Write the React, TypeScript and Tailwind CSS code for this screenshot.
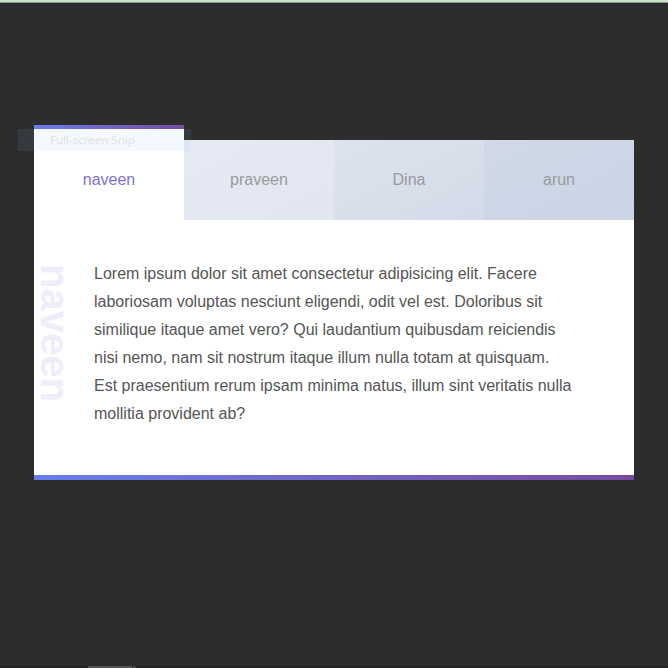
import React from "react";

export default function App() {
  return (
    <div className="relative flex h-[668px] w-[668px] flex-col overflow-hidden bg-[#2d2d2d] font-['Liberation_Sans',Arial,sans-serif]">
      <div className="h-[2px] bg-[#c9e3c9]" />
      <div className="h-[1px] bg-[#8d9c8d]" />
      <div className="pl-[34px] pt-[122px]">
        <div className="w-[600px]">
          <div className="flex h-[95px] items-end">
            <div className="flex h-[95px] w-[150px] flex-col bg-white">
              <div className="h-[4px] bg-gradient-to-r from-[#667eea] to-[#764ba2]" />
              <div className="mt-[11px] flex h-[80px] items-center justify-center text-[16px] text-[#7b70d9]">
                naveen
              </div>
            </div>
            <div className="flex h-[80px] w-[150px] items-center justify-center bg-gradient-to-br from-[#e6eaf4] to-[#e1e6f0] text-[16px] text-[#9a9a9a]">
              praveen
            </div>
            <div className="flex h-[80px] w-[150px] items-center justify-center bg-gradient-to-br from-[#dde3ee] to-[#d4dbe8] text-[16px] text-[#9a9a9a]">
              Dina
            </div>
            <div className="flex h-[80px] w-[150px] items-center justify-center bg-gradient-to-br from-[#d1d9e8] to-[#cad4e5] text-[16px] text-[#9a9a9a]">
              arun
            </div>
          </div>
          <div className="relative h-[255px] bg-white px-[60px] pt-[40px]">
            <div className="absolute left-[1px] top-[44px] font-bold text-[40px] leading-none text-[#eeedfa] [writing-mode:vertical-rl]">
              naveen
            </div>
            <p className="text-[16px] leading-[28px] text-[#555555]">
              Lorem ipsum dolor sit amet consectetur adipisicing elit. Facere laboriosam voluptas nesciunt eligendi, odit vel est. Doloribus sit similique itaque amet vero? Qui laudantium quibusdam reiciendis nisi nemo, nam sit nostrum itaque illum nulla totam at quisquam. Est praesentium rerum ipsam minima natus, illum sint veritatis nulla mollitia provident ab?
            </p>
          </div>
          <div className="h-[5px] bg-gradient-to-r from-[#667eea] to-[#764ba2]" />
        </div>
      </div>
      <div className="mt-auto flex h-[2px] bg-[#232323]">
        <div className="ml-[88px] w-[44px] bg-[#555555]" />
        <div className="ml-[1px] w-[3px] bg-[#444444]" />
      </div>
      <div className="absolute left-[18px] top-[129px] flex h-[22px] w-[173px] items-center bg-[rgba(130,192,245,0.095)] pl-[32px] font-['Noto_Sans',sans-serif] text-[11.5px] text-[#e2e2e2]">
        Full-screen Snip
      </div>
    </div>
  );
}
